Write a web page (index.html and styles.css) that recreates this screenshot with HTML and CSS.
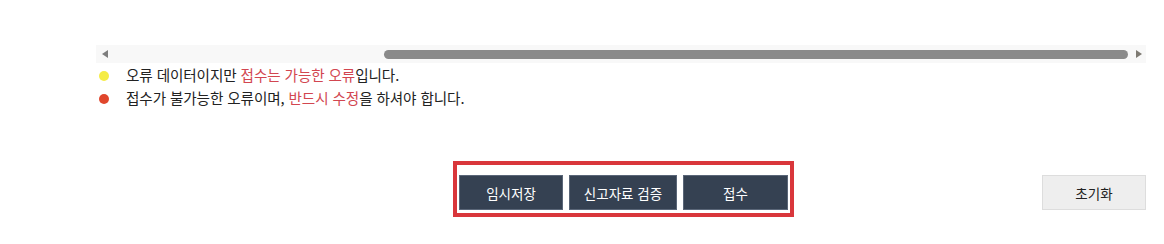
FILE: index.html
```html
<!DOCTYPE html>
<html lang="ko">
<head>
<meta charset="utf-8">
<link rel="stylesheet" href="styles.css">
</head>
<body>
<div class="wrap">
  <div class="hscroll">
    <span class="arrow arrow-left"></span>
    <div class="track">
      <div class="thumb"></div>
    </div>
    <span class="arrow arrow-right"></span>
  </div>
  <ul class="legend">
    <li><span class="dot dot-yellow"></span>오류 데이터이지만 <em>접수는 가능한 오류</em>입니다.</li>
    <li><span class="dot dot-red"></span>접수가 불가능한 오류이며, <em>반드시 수정</em>을 하셔야 합니다.</li>
  </ul>
  <div class="actions">
    <div class="group">
      <button class="btn btn-dark btn-save">임시저장</button>
      <button class="btn btn-dark btn-check">신고자료 검증</button>
      <button class="btn btn-dark btn-submit">접수</button>
    </div>
    <button class="btn btn-light btn-reset">초기화</button>
  </div>
</div>
</body>
</html>
```
FILE: styles.css
```css
* { box-sizing: border-box; }
html, body { margin: 0; padding: 0; background: #fff; }
body {
  font-family: "Noto Sans CJK KR", "Noto Sans", sans-serif;
  color: #333;
}
.wrap {
  width: 1164px;
  height: 244px;
  padding: 45px 18px 0 96px;
}
.hscroll {
  display: flex;
  align-items: center;
  height: 18px;
  background: #f8f8f8;
  padding: 0 4px 0 6px;
}
.arrow {
  width: 0; height: 0;
  border-top: 4px solid transparent;
  border-bottom: 4px solid transparent;
}
.arrow-left { border-right: 6px solid #7e7e7e; }
.arrow-right { border-left: 6px solid #7e7a72; }
.track {
  flex: 1;
  display: flex;
  justify-content: flex-end;
  padding: 0 8px 0 0;
}
.thumb {
  width: 744px;
  height: 9px;
  background: #8a8a8a;
  border-radius: 5px;
}
.legend {
  list-style: none;
  margin: 0;
  padding: 0;
  font-size: 14.6px;
  line-height: 23px;
  color: #222;
  letter-spacing: -0.1px;
}
.legend li {
  display: block;
  white-space: nowrap;
}
.legend em { font-style: normal; color: #d24650; }
.dot {
  display: inline-block;
  vertical-align: middle;
  width: 10px; height: 10px;
  border-radius: 50%;
  margin: -3px 17px 0 3px;
}
.dot-yellow { background: #f5ec45; }
.dot-red { background: #e0462c; }
.actions {
  display: grid;
  grid-template-columns: 1fr auto 1fr;
  align-items: end;
  margin-top: 52px;
}
.group {
  grid-column: 2;
  display: flex;
  gap: 6px;
  padding: 10px 2px 3px 2px;
  border: 4px solid #d9363b;
  margin-left: 5px;
}
.btn {
  font-family: inherit;
  font-size: 13.5px;
  height: 35px;
  padding: 0;
  cursor: pointer;
}
.btn-dark {
  background: #354152;
  color: #fff;
  border: 1px solid #5a6678;
}
.btn-save { width: 104px; }
.btn-check { width: 108px; }
.btn-submit { width: 105px; }
.btn-light {
  grid-column: 3;
  justify-self: end;
  width: 104px;
  background: #eeeeee;
  color: #222;
  border: 1px solid #dddddd;
  margin-bottom: 7px;
}
```
